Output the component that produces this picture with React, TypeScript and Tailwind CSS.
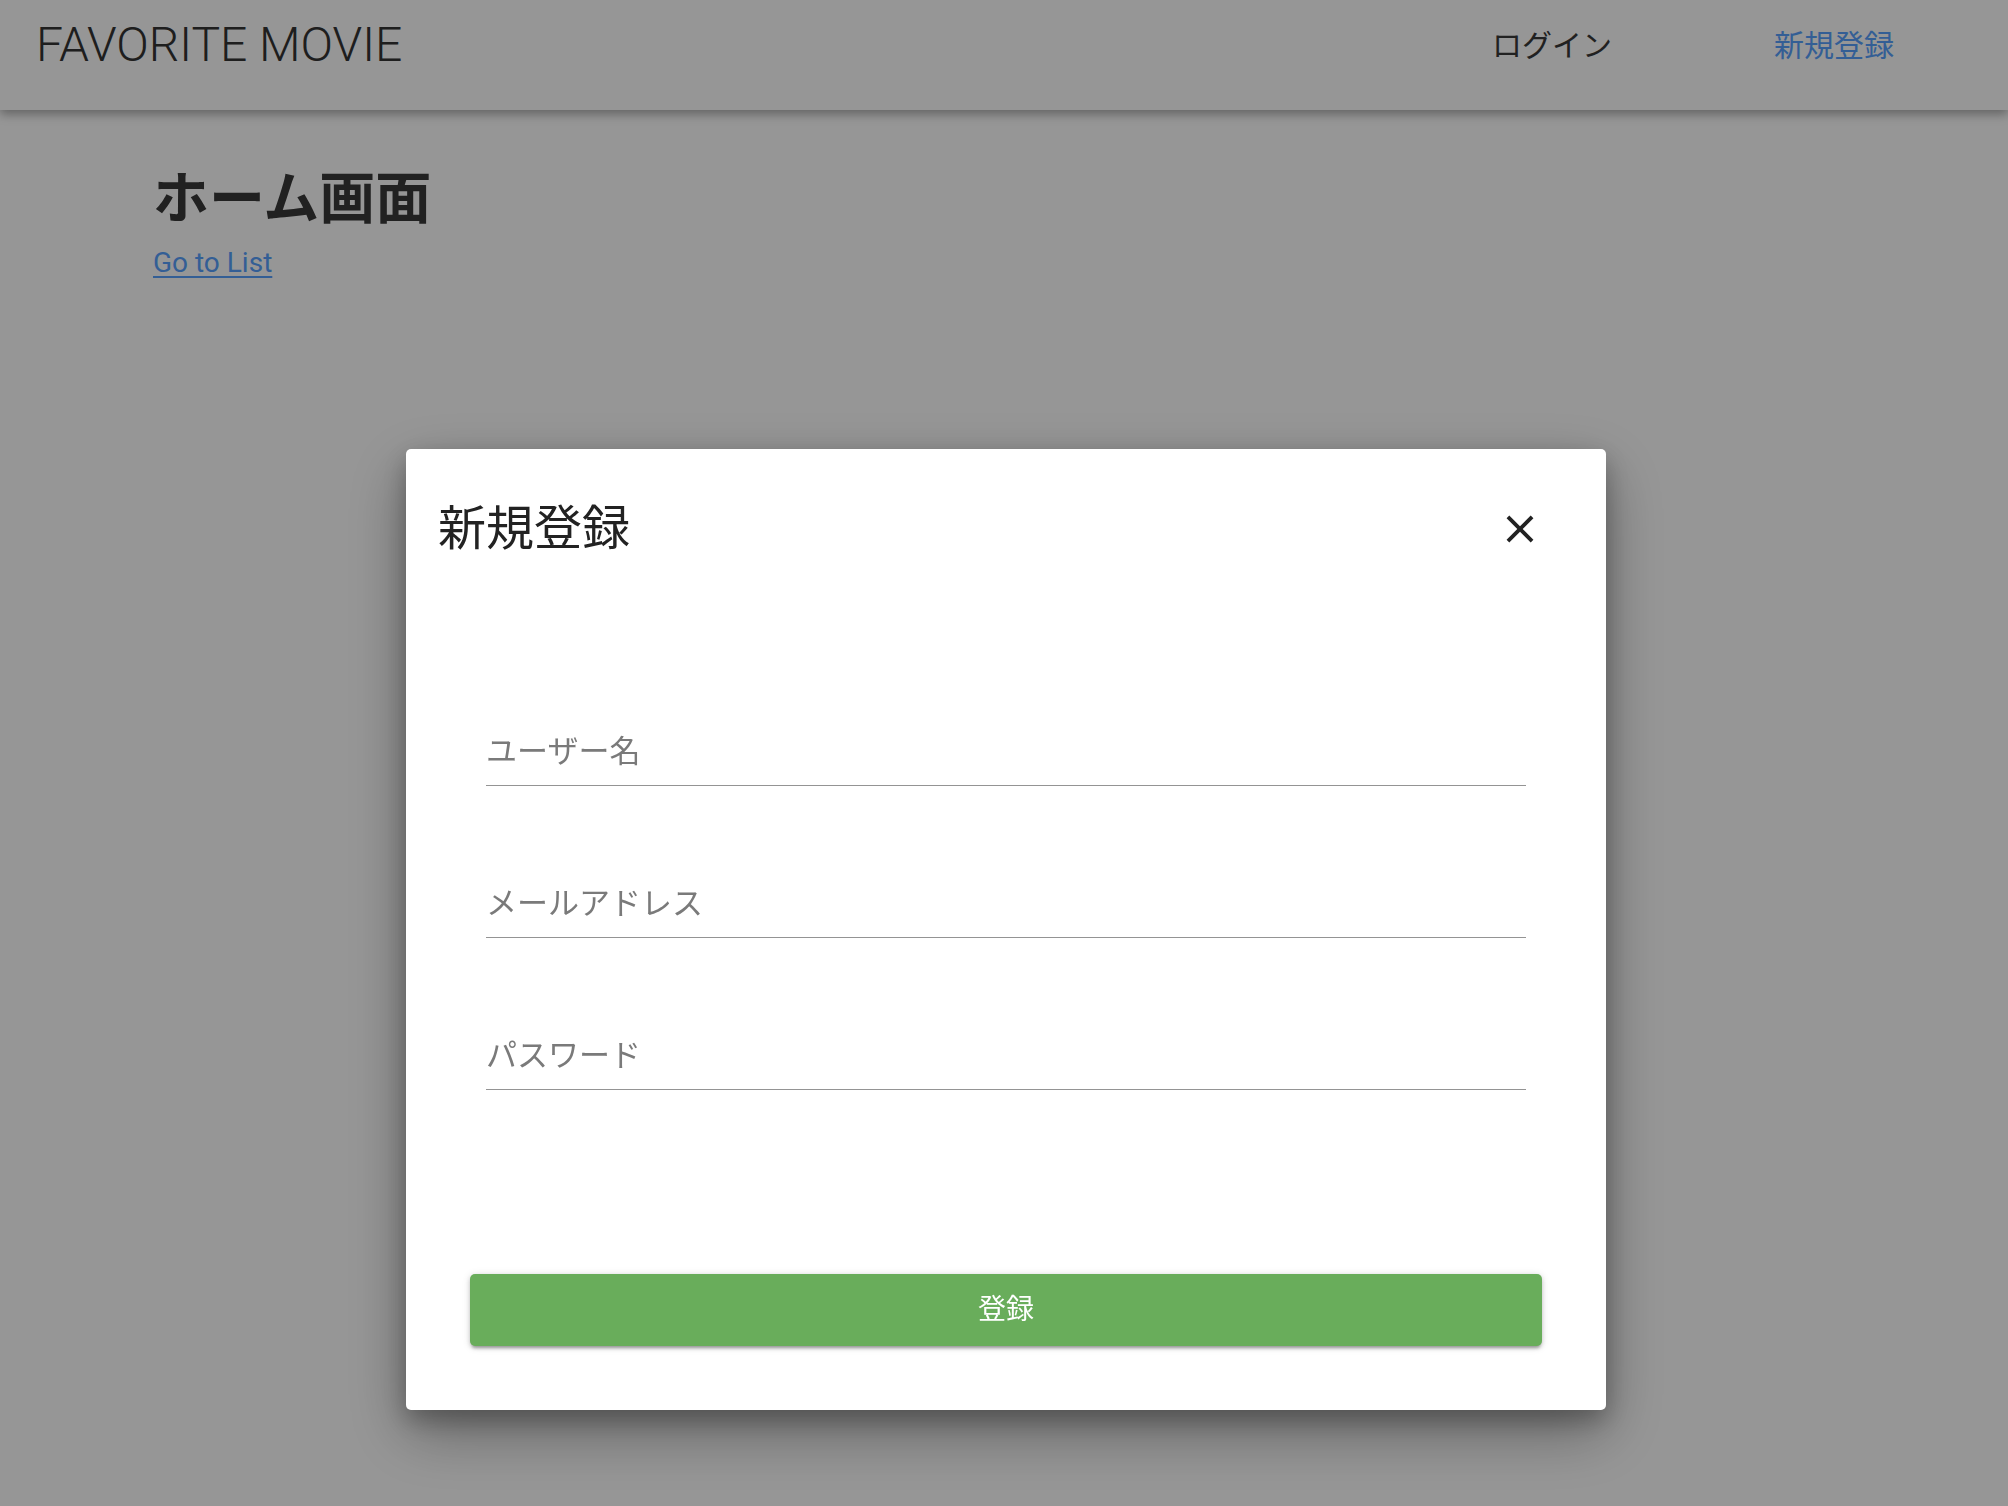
import React from "react";

function CloseIcon() {
  return (
    <svg width="46" height="46" viewBox="0 0 24 24" aria-hidden="true">
      <path
        fill="#222222"
        d="M19 6.41L17.59 5 12 10.59 6.41 5 5 6.41 10.59 12 5 17.59 6.41 19 12 13.41 17.59 19 19 17.59 13.41 12z"
      />
    </svg>
  );
}

function Field({ label, type, last }: { label: string; type: string; last?: boolean }) {
  return (
    <div className={last ? "" : "mb-[83px]"}>
      <input
        type={type}
        placeholder={label}
        className="block w-full h-[68px] bg-transparent outline-none text-[31px] text-[#222] placeholder:text-[#7a7a7a] font-[family-name:Roboto,'Noto_Sans_CJK_JP',sans-serif]"
      />
      <div className="h-px bg-[#949494]" />
    </div>
  );
}

export default function App() {
  return (
    <div className="relative min-h-[1506px] bg-white font-[family-name:Roboto,'Noto_Sans_CJK_JP',sans-serif]">
      <header className="relative z-10 h-[110px] bg-white shadow-[0_4px_10px_rgba(0,0,0,0.35)]">
        <div className="flex h-[90px] items-center">
          <div className="pl-[36px] text-[48px] font-light text-[#333333]">
            FAVORITE MOVIE
          </div>
          <nav className="ml-auto flex items-center gap-[162px] pr-[114px] text-[30px]">
            <span className="text-[#383838]">ログイン</span>
            <span className="text-[#58a1fe]">新規登録</span>
          </nav>
        </div>
      </header>

      <main className="pl-[153px] pt-[51px]">
        <h1 className="text-[56px] font-bold leading-[76px] text-[#383838]">
          ホーム画面
        </h1>
        <a
          href="#"
          className="mt-[8px] inline-block text-[28px] leading-[36px] text-[#58a1fe] underline underline-offset-[4px] decoration-[2px]"
        >
          Go to List
        </a>
      </main>

      <div className="fixed inset-0 z-20 flex justify-center bg-black/[0.41] pl-[4px] pt-[449px]">
        <div className="flex h-[961px] w-[1200px] flex-col rounded-[5px] bg-white shadow-[0_22px_60px_rgba(0,0,0,0.35),0_10px_24px_rgba(0,0,0,0.25)]">
          <div className="mt-[48px] flex h-[64px] items-center pl-[32px] pr-[63px]">
            <h2 className="text-[48px] font-normal leading-[64px] text-[#222222]">新規登録</h2>
            <button className="ml-auto flex h-[46px] w-[46px] items-center justify-center">
              <CloseIcon />
            </button>
          </div>

          <form className="mt-[156px] px-[80px]">
            <Field label="ユーザー名" type="text" />
            <Field label="メールアドレス" type="email" />
            <Field label="パスワード" type="password" last />
          </form>

          <div className="mx-[64px] mt-[184px]">
            <button className="flex h-[72px] w-full items-center justify-center rounded-[5px] bg-[#69ad5b] text-[28px] text-white shadow-[0_4px_3px_-2px_rgba(0,0,0,0.25),0_2px_4px_rgba(0,0,0,0.16),0_1px_8px_rgba(0,0,0,0.12)]">
              登録
            </button>
          </div>
        </div>
      </div>
    </div>
  );
}
